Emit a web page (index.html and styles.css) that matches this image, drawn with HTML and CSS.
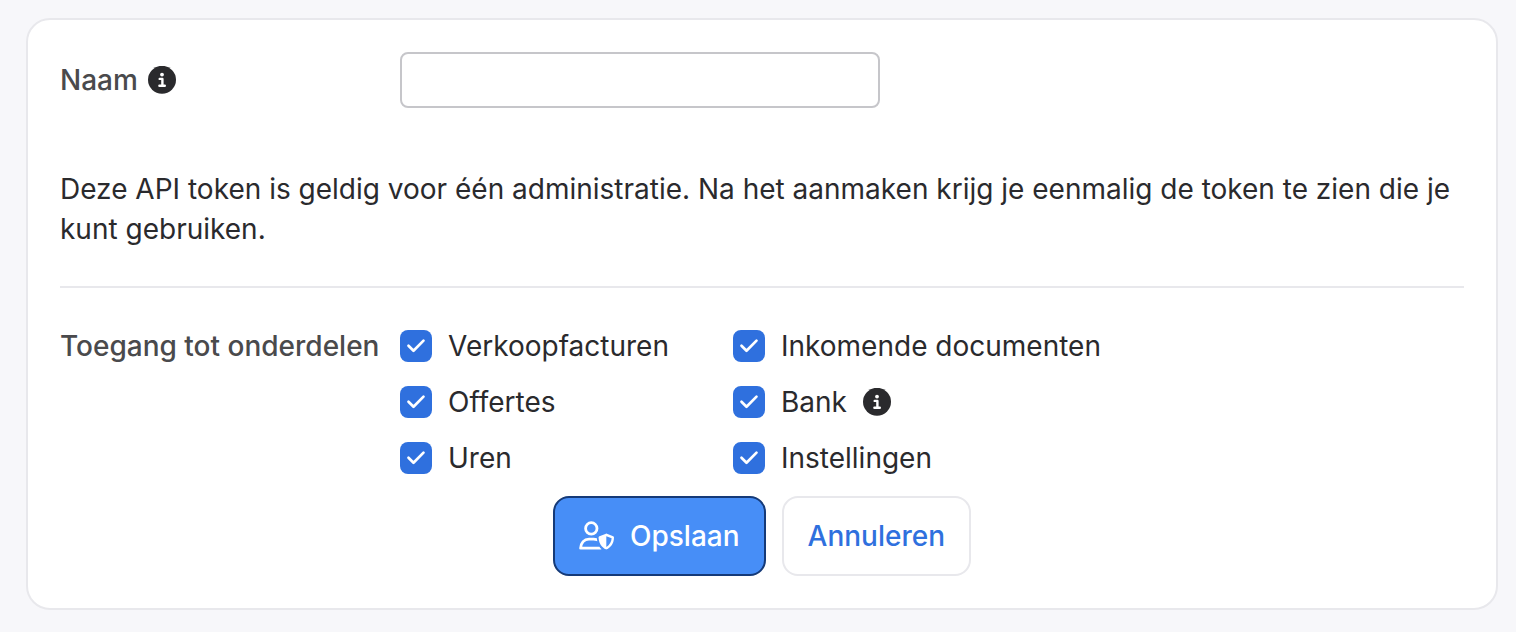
FILE: index.html
```html
<!DOCTYPE html>
<html lang="nl">
<head>
<meta charset="utf-8">
<meta name="viewport" content="width=device-width, initial-scale=1">
<title>API token</title>
<link rel="stylesheet" href="styles.css">
</head>
<body>
<svg class="sprite" aria-hidden="true">
  <symbol id="info" viewBox="0 0 28 28">
    <circle cx="14" cy="13.8" r="14" fill="#2a2a2d"/>
    <circle cx="14" cy="8.6" r="1.9" fill="#fff"/>
    <path d="M11.7 12.9h2.7v6.6M11.4 19.7h5.4" fill="none" stroke="#fff" stroke-width="2.4" stroke-linecap="round" stroke-linejoin="round"/>
  </symbol>
</svg>
<form class="card">
  <div class="row">
    <div class="row-label">
      <label for="name">Naam</label>
      <svg class="info-icon" role="img" aria-label="Informatie"><use href="#info"/></svg>
    </div>
    <input class="text-input" id="name" type="text">
  </div>
  <p class="intro">Deze API token is geldig voor één administratie. Na het aanmaken krijg je eenmalig de token te zien die je kunt gebruiken.</p>
  <hr class="divider">
  <div class="row" role="group" aria-labelledby="access">
    <div class="row-label row-label-top" id="access">Toegang tot onderdelen</div>
    <div class="options">
      <label class="option"><input class="checkbox" type="checkbox" checked>Verkoopfacturen</label>
      <label class="option"><input class="checkbox" type="checkbox" checked>Inkomende documenten</label>
      <label class="option"><input class="checkbox" type="checkbox" checked>Offertes</label>
      <label class="option"><input class="checkbox" type="checkbox" checked>Bank<svg class="info-icon" role="img" aria-label="Informatie"><use href="#info"/></svg></label>
      <label class="option"><input class="checkbox" type="checkbox" checked>Uren</label>
      <label class="option"><input class="checkbox" type="checkbox" checked>Instellingen</label>
    </div>
  </div>
  <div class="actions">
    <button class="button button-primary" type="submit">
      <svg class="button-icon" viewBox="0 0 35 30" aria-hidden="true">
        <g fill="none" stroke="#fff" stroke-width="2.8" stroke-linejoin="round">
          <circle cx="12.3" cy="7.4" r="5.7"/>
          <path d="M18 18.8C16.8 18.3 15.7 18.1 14.5 18.1H10C5.2 18.1 1.8 21.9 1.6 27.2h19.9" stroke-linecap="round"/>
        </g>
        <path d="M27.4 11.6l8.6 3.1v4L28.4 29.4H24l-3-2.6-3-7.8v-4z" fill="#478ef7"/>
        <path d="M27.3 12.6l6.9 2.7c.5.2.8.6.8 1.1-.1 4.8-2.2 9.3-7.1 11.9-.4.2-.8.2-1.2 0-4.9-2.6-7-7.1-7.1-11.9 0-.5.3-.9.8-1.1l6-2.4z" fill="#fff"/>
        <path d="M27.3 15.3l5.3 2c-.2 3.5-1.8 6.5-5.3 8.7z" fill="#478ef7"/>
      </svg>
      Opslaan
    </button>
    <button class="button button-secondary" type="button">Annuleren</button>
  </div>
</form>
</body>
</html>
```
FILE: styles.css
```css
* {
  box-sizing: border-box;
}

body {
  margin: 0;
  padding: 18px 18px 22px 26px;
  background: #f7f7fa;
  color: #2a2a2d;
  font: 400 28px/40px Inter, sans-serif;
}

.sprite {
  display: none;
}

.card {
  padding: 32px;
  border: 2px solid #e8e8ec;
  border-radius: 24px;
  background: #fff;
}

.row {
  display: grid;
  grid-template-columns: 340px 1fr;
  align-items: center;
}

.row-label {
  display: flex;
  align-items: center;
  gap: 10px;
  color: #4a4a4c;
  font-weight: 500;
  white-space: nowrap;
}

.row-label-top {
  align-self: start;
}

.info-icon {
  flex: none;
  width: 28px;
  height: 28px;
  overflow: visible;
}

.text-input {
  width: 100%;
  max-width: 480px;
  height: 56px;
  padding: 0 16px;
  border: 2px solid #c6c6ca;
  border-radius: 8px;
  background: #fff;
  color: inherit;
  font: inherit;
}

.intro {
  margin: 61px 0 37px;
}

.divider {
  height: 2px;
  margin: 0 0 38px;
  border: 0;
  background: #e8e8ec;
}

.options {
  display: grid;
  grid-template-columns: 333px 1fr;
  row-gap: 16px;
}

.option {
  display: flex;
  align-items: center;
  gap: 16px;
}

.checkbox {
  flex: none;
  appearance: none;
  width: 32px;
  height: 32px;
  margin: 0;
  border-radius: 8px;
  background: #e8e8ec;
}

.checkbox:checked {
  background: #2f70de url("data:image/svg+xml,%3Csvg xmlns='http://www.w3.org/2000/svg' viewBox='0 0 32 32'%3E%3Cpath d='M8.5 15.7l5 5L23.5 10.6' fill='none' stroke='%23fff' stroke-width='2.7' stroke-linecap='round' stroke-linejoin='round'/%3E%3C/svg%3E");
}

.actions {
  display: flex;
  justify-content: center;
  gap: 16px;
  margin-top: 18px;
}

.button {
  display: flex;
  align-items: center;
  gap: 16px;
  padding: 18px 24px;
  border: 2px solid;
  border-radius: 16px;
  font: 500 28px/40px Inter, sans-serif;
}

.button-primary {
  border-color: #153a78;
  background: #478ef7;
  color: #fff;
}

.button-secondary {
  border-color: #e8e8ec;
  background: #fff;
  color: #2f70de;
}

.button-icon {
  width: 35px;
  height: 30px;
}
```
